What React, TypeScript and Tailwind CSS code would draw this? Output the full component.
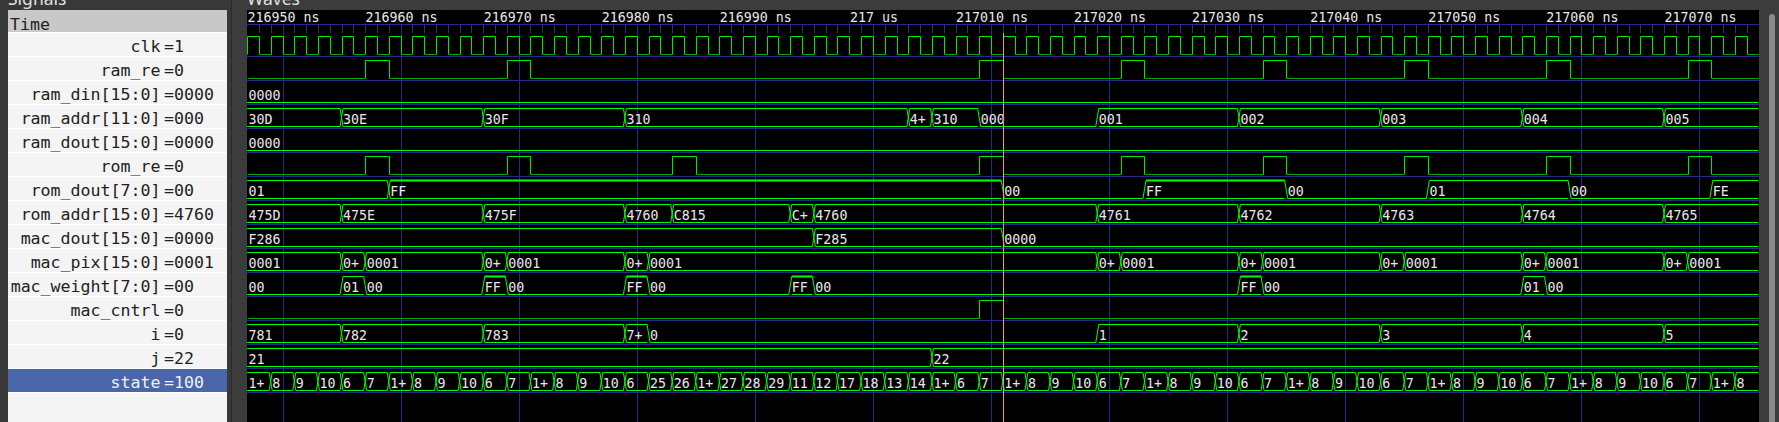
const X = (t: number) => 282.5 + 11.808 * t;
const END = 125;
const MONO = '"DejaVu Sans Mono", monospace';
const BRIGHT = '#00ff00';
const HIGH = '#00e800';
const LOW = '#00a800';
const GRID = '#28288a';
const TICK = '#2e2e90';

const signals: { name: string; value: string; selected?: boolean }[] = [
  { name: 'clk', value: '1' },
  { name: 'ram_re', value: '0' },
  { name: 'ram_din[15:0]', value: '0000' },
  { name: 'ram_addr[11:0]', value: '000' },
  { name: 'ram_dout[15:0]', value: '0000' },
  { name: 'rom_re', value: '0' },
  { name: 'rom_dout[7:0]', value: '00' },
  { name: 'rom_addr[15:0]', value: '4760' },
  { name: 'mac_dout[15:0]', value: '0000' },
  { name: 'mac_pix[15:0]', value: '0001' },
  { name: 'mac_weight[7:0]', value: '00' },
  { name: 'mac_cntrl', value: '0' },
  { name: 'i', value: '0' },
  { name: 'j', value: '22' },
  { name: 'state', value: '100', selected: true },
];

type Seg = [number, string];

const bus: Record<number, Seg[]> = {
  2: [[-3, '0000']],
  3: [[-3, '30D'], [5, '30E'], [17, '30F'], [29, '310'], [53, '4+'], [55, '310'], [59, '000'], [69, '001'], [81, '002'], [93, '003'], [105, '004'], [117, '005']],
  4: [[-3, '0000']],
  6: [[-3, '01'], [9, 'FF'], [61, '00'], [73, 'FF'], [85, '00'], [97, '01'], [109, '00'], [121, 'FE']],
  7: [[-3, '475D'], [5, '475E'], [17, '475F'], [29, '4760'], [33, 'C815'], [43, 'C+'], [45, '4760'], [69, '4761'], [81, '4762'], [93, '4763'], [105, '4764'], [117, '4765']],
  8: [[-3, 'F286'], [45, 'F285'], [61, '0000']],
  9: [[-3, '0001'], [5, '0+'], [7, '0001'], [17, '0+'], [19, '0001'], [29, '0+'], [31, '0001'], [69, '0+'], [71, '0001'], [81, '0+'], [83, '0001'], [93, '0+'], [95, '0001'], [105, '0+'], [107, '0001'], [117, '0+'], [119, '0001']],
  10: [[-3, '00'], [5, '01'], [7, '00'], [17, 'FF'], [19, '00'], [29, 'FF'], [31, '00'], [43, 'FF'], [45, '00'], [81, 'FF'], [83, '00'], [105, '01'], [107, '00']],
  12: [[-3, '781'], [5, '782'], [17, '783'], [29, '7+'], [31, '0'], [69, '1'], [81, '2'], [93, '3'], [105, '4'], [117, '5']],
  13: [[-3, '21'], [55, '22']],
};

const loop = '1+ 8 9 10 6 7';
const stateSeq = [
  loop,
  loop,
  '1+ 8 9 10 6 25 26 1+ 27 28 29 11 12 17 18 13 14 1+ 6 7',
  loop,
  loop,
  loop,
  loop,
  loop,
  '1+ 8',
]
  .join(' ')
  .split(' ');
bus[14] = stateSeq.map((v, i) => [-3 + i * 2, v] as Seg);

const pulses: Record<number, number[]> = {
  1: [7, 19, 59, 71, 83, 95, 107, 119],
  5: [7, 19, 33, 59, 71, 83, 95, 107, 119],
  11: [59],
};

const isZero = (v: string) => /^0+$/.test(v);

function BitRow({ row, highs }: { row: number; highs: [number, number][] }) {
  const top = 36.5 + 24 * row;
  const bot = 54.5 + 24 * row;
  const els: React.ReactNode[] = [];
  let cur = -3;
  const px = (t: number) => Math.round(X(t)) + 0.5;
  highs.forEach(([a, b], i) => {
    if (a > cur) els.push(<line key={`l${i}`} x1={px(cur)} x2={px(a)} y1={bot} y2={bot} stroke={LOW} />);
    els.push(<line key={`r${i}`} x1={px(a)} x2={px(a)} y1={top} y2={bot} stroke={HIGH} />);
    els.push(<line key={`h${i}`} x1={px(a)} x2={px(b)} y1={top} y2={top} stroke={HIGH} />);
    if (b < END) els.push(<line key={`f${i}`} x1={px(b)} x2={px(b)} y1={top} y2={bot} stroke={HIGH} />);
    cur = b;
  });
  if (cur < END) els.push(<line key="end" x1={px(cur)} x2={px(END)} y1={bot} y2={bot} stroke={LOW} />);
  return <g transform="translate(-247 -10)">{els}</g>;
}

function BusRow({ row, segs }: { row: number; segs: Seg[] }) {
  const top = 36.5 + 24 * row;
  const bot = 54.5 + 24 * row;
  const els: React.ReactNode[] = [];
  segs.forEach(([t, v], i) => {
    const t1 = i + 1 < segs.length ? segs[i + 1][0] : END;
    const x0 = X(t);
    const x1 = X(t1);
    const a = i === 0 ? x0 : x0 + 1.5;
    const b = t1 === END ? x1 : x1 - 1.5;
    const zero = isZero(v);
    els.push(<line key={`b${i}`} x1={a} x2={b} y1={bot} y2={bot} stroke={BRIGHT} />);
    if (!zero) {
      const thick = v === 'FF';
      els.push(<line key={`t${i}`} x1={a} x2={b} y1={top} y2={top} stroke={BRIGHT} strokeWidth={thick ? 2 : 1} />);
    }
    if (i + 1 < segs.length) {
      const nz = isZero(segs[i + 1][1]);
      if (!zero) els.push(<line key={`x${i}`} x1={b} y1={top} x2={x1 + 1.5} y2={bot} stroke={BRIGHT} />);
      if (!nz) els.push(<line key={`y${i}`} x1={b} y1={bot} x2={x1 + 1.5} y2={top} stroke={BRIGHT} />);
    }
    els.push(
      <text key={`v${i}`} x={x0 + 1.5} y={52 + 24 * row} fill="#e8e8e8" fontSize={13.3} fontFamily={MONO}>
        {v}
      </text>,
    );
  });
  return <g transform="translate(-247 -10)">{els}</g>;
}

function Waves() {
  const labels = ['216950 ns', '216960 ns', '216970 ns', '216980 ns', '216990 ns', '217 us', '217010 ns', '217020 ns', '217030 ns', '217040 ns', '217050 ns', '217060 ns', '217070 ns'];
  const clkHighs: [number, number][] = [];
  for (let t = -3; t < END; t += 2) clkHighs.push([t, t + 1]);
  const ticks: number[] = [];
  for (let t = -2; t <= END; t++) ticks.push(t);
  return (
    <svg width={1512} height={412} className="block bg-black shrink-0">
      <g transform="translate(-247 -10)">
        {ticks.map((t) => (
          <line key={t} x1={Math.round(X(t)) + 0.5} x2={Math.round(X(t)) + 0.5} y1={24} y2={33} stroke={TICK} />
        ))}
        {labels.map((_, i) => (
          <line key={i} x1={Math.round(X(i * 10)) + 0.5} x2={Math.round(X(i * 10)) + 0.5} y1={24} y2={422} stroke={GRID} />
        ))}
        <line x1={247} x2={1759} y1={24.5} y2={24.5} stroke={GRID} />
        {signals.map((_, r) => (
          <line key={r} x1={247} x2={1759} y1={56.5 + 24 * r} y2={56.5 + 24 * r} stroke={GRID} />
        ))}
        {labels.map((l, i) => (
          <text key={l} x={X(i * 10) + 1} y={22} textAnchor="middle" fill="#e8e8e8" fontSize={13.3} fontFamily={MONO}>
            {l}
          </text>
        ))}
      </g>
      <BitRow row={0} highs={clkHighs} />
      {Object.entries(pulses).map(([r, starts]) => (
        <BitRow key={r} row={Number(r)} highs={starts.map((s) => [s, s + 2] as [number, number])} />
      ))}
      {Object.entries(bus).map(([r, segs]) => (
        <BusRow key={r} row={Number(r)} segs={segs} />
      ))}
      <line x1={Math.round(X(61)) - 247 + 0.5} x2={Math.round(X(61)) - 247 + 0.5} y1={23} y2={412} stroke="#f09090" />
    </svg>
  );
}

function SignalRow({ name, value, selected }: { name: string; value: string; selected?: boolean }) {
  return (
    <div className={`h-6 flex border-b border-white leading-[27px] ${selected ? 'bg-[#4866a8] text-[#f0f0f0]' : 'text-[#222222]'}`}>
      <span className="w-[152.5px] shrink-0 text-right whitespace-nowrap">{name}</span>
      <span className="w-[3.5px] shrink-0" />
      <span className="whitespace-nowrap">={value}</span>
    </div>
  );
}

function PaneTitle({ children }: { children: string }) {
  return (
    <div className="h-[10px] overflow-hidden">
      <div className="-mt-[8px] text-[17.5px] leading-[12px] text-[#e0e0e0]">{children}</div>
    </div>
  );
}

export default function App() {
  return (
    <div className="h-[422px] w-[1779px] overflow-hidden flex bg-[#383838]" style={{ fontFamily: '"Noto Sans", sans-serif' }}>
      <div className="w-[231px] shrink-0 pl-2 pr-1">
        <PaneTitle>Signals</PaneTitle>
        <div className="h-[412px] bg-[#f4f4f4] text-[16.6px]" style={{ fontFamily: MONO }}>
          <div className="h-[23px] bg-[#c8c8c8] border-b border-white pl-[2px] leading-[29px] text-[#222222]">Time</div>
          {signals.map((s) => (
            <SignalRow key={s.name} {...s} />
          ))}
        </div>
      </div>
      <div className="w-px bg-[#2b2b2b] shrink-0" />
      <div className="flex-1 min-w-0 flex bg-[#3c3c3c] pl-[15px]">
        <div className="w-[1512px] shrink-0">
          <PaneTitle>Waves</PaneTitle>
          <Waves />
        </div>
        <div className="w-[10px] shrink-0" />
        <div className="w-[6px] shrink-0 bg-[#8a8a8a] mt-[14px] rounded-t-full" />
      </div>
    </div>
  );
}
